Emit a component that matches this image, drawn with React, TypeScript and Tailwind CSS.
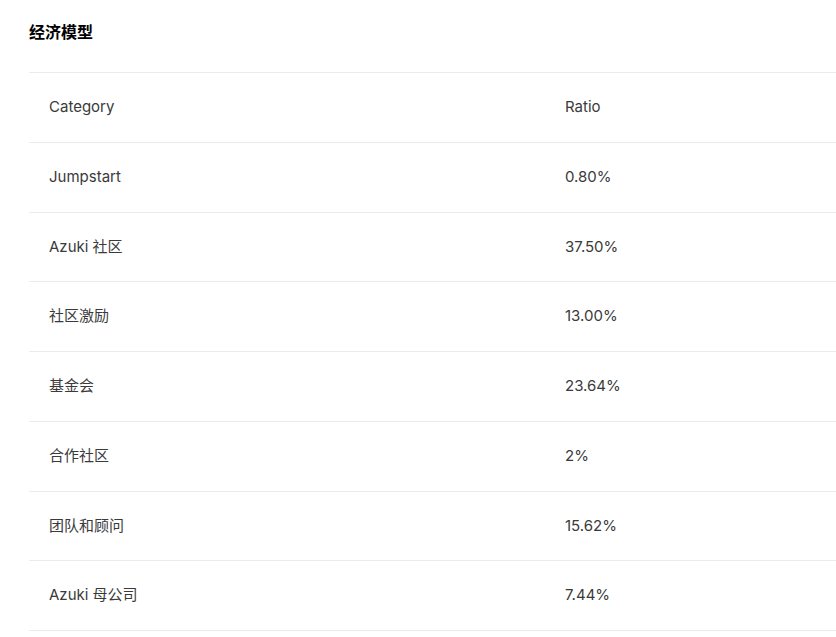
const rows: [string, string][] = [
  ["Jumpstart", "0.80%"],
  ["Azuki 社区", "37.50%"],
  ["社区激励", "13.00%"],
  ["基金会", "23.64%"],
  ["合作社区", "2%"],
  ["团队和顾问", "15.62%"],
  ["Azuki 母公司", "7.44%"],
];

export default function App() {
  return (
    <div
      className="w-[836px] h-[637px] overflow-hidden bg-white"
      style={{ fontFamily: 'Inter, "Noto Sans CJK SC", sans-serif' }}
    >
      <h2 className="pl-[29px] pt-[22px] h-[72px] text-[16px] font-bold text-black leading-[20px]">
        经济模型
      </h2>
      <div className="ml-[29px] w-[840px] border-t border-[#ebebeb] text-[15px] text-[#3a3a3a]">
        <div className="flex h-[69.75px] items-center border-b border-[#ebebeb]">
          <div className="w-[516px] pl-5">Category</div>
          <div className="pl-5">Ratio</div>
        </div>
        {rows.map(([cat, ratio]) => (
          <div key={cat} className="flex h-[69.75px] items-center border-b border-[#ebebeb]">
            <div className="w-[516px] pl-5">{cat}</div>
            <div className="pl-5">{ratio}</div>
          </div>
        ))}
      </div>
    </div>
  );
}
